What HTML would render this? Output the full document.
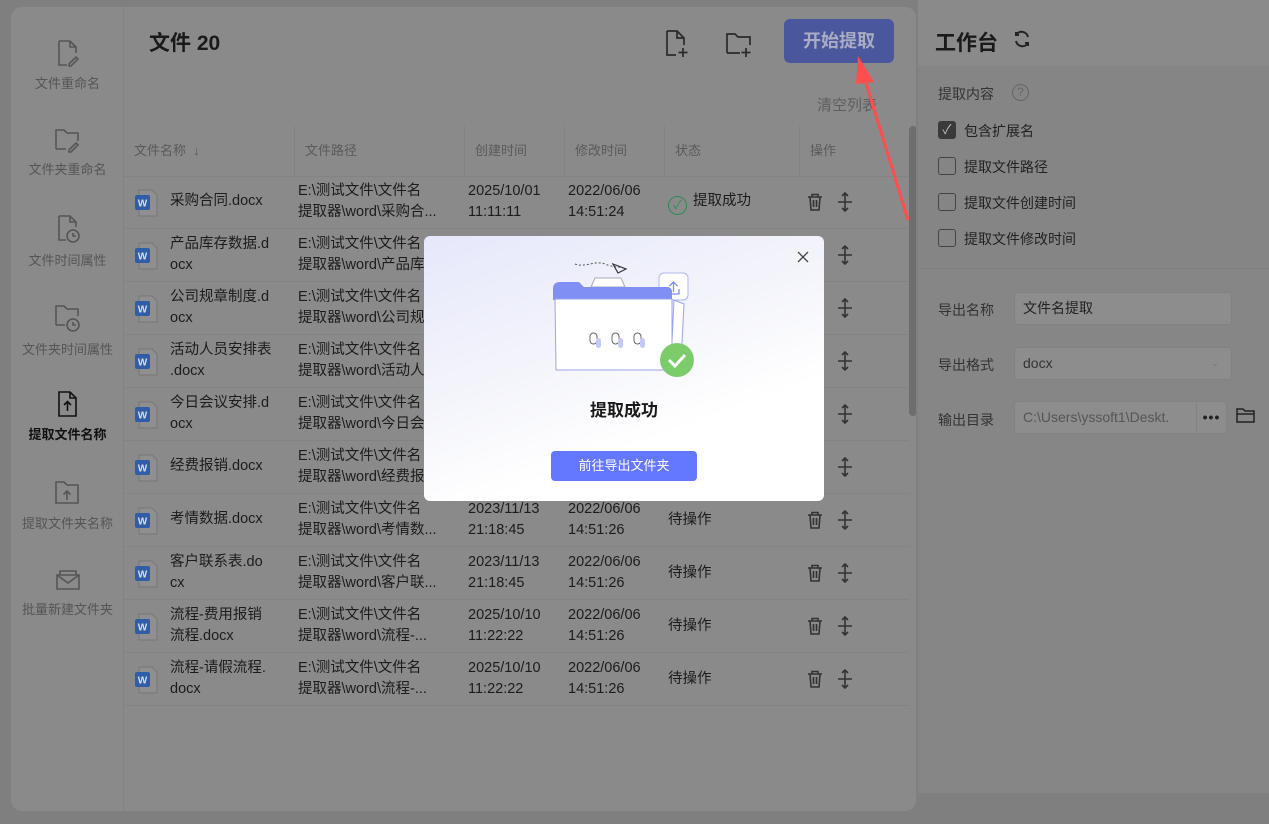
<!DOCTYPE html>
<html><head><meta charset="utf-8"><style>
*{box-sizing:border-box;margin:0;padding:0}
body{width:1269px;height:824px;background:#7f7f7f;font-family:"Liberation Sans","Noto Sans CJK SC",sans-serif;position:relative;overflow:hidden;color:#1c1c1c}
.card{position:absolute;left:10px;top:6px;width:907px;height:806px;background:#8a8a8a;border-radius:12px;border:1px solid #808080;overflow:hidden}
.side{position:absolute;left:0;top:0;width:113px;height:100%;border-right:1px solid #828282}
.si{position:absolute;left:0;width:113px;text-align:center;font-size:13px;color:#555}
.si svg{display:block;margin:0 auto 6px}
.si.act{color:#111;font-weight:bold}
.abs{position:absolute}
.th{position:absolute;top:119px;height:50px;line-height:50px;font-size:13px;color:#5a5a5a;padding-left:10px;border-left:1px solid #828282}
.row{position:absolute;left:113px;width:785px;height:53px;border-bottom:1px solid #838383;font-size:14.5px}
.row div{position:absolute;line-height:21px}
.w{position:absolute;left:10px;top:13px;width:24px;height:28px}
.rp{position:absolute;left:918px;top:0;width:351px;height:793px;background:#8a8a8a}
.cb{position:absolute;left:938px;width:18px;height:18px;border:1px solid #444;border-radius:3px}
.lbl{position:absolute;font-size:14px;color:#222}
.inp{position:absolute;left:1014px;width:218px;height:33px;border:1px solid #828282;border-radius:4px;background:#8d8d8d;font-size:14px;line-height:31px;padding-left:8px}
</style></head><body>
<div class="card">
 <div class="side">
  <div class="si" style="top:32px"><svg width="26" height="28" viewBox="0 0 26 28" fill="none" stroke="#555" stroke-width="1.6"><path d="M4 2h11l6 6v6M4 2v24h8M15 2v6h6"/><path d="M14 25l7-7 2 2-7 7h-2z"/></svg>文件重命名</div>
  <div class="si" style="top:120px"><svg width="28" height="26" viewBox="0 0 28 26" fill="none" stroke="#555" stroke-width="1.6"><path d="M2 22V3h8l3 3h11v8M2 22h10"/><path d="M15 23l7-7 2 2-7 7h-2z"/></svg>文件夹重命名</div>
  <div class="si" style="top:207px"><svg width="26" height="30" viewBox="0 0 26 30" fill="none" stroke="#555" stroke-width="1.6"><path d="M4 2h11l6 6v5M4 2v24h7M15 2v6h6"/><circle cx="18" cy="22" r="6"/><path d="M18 19v3h3"/></svg>文件时间属性</div>
  <div class="si" style="top:296px"><svg width="28" height="30" viewBox="0 0 28 30" fill="none" stroke="#555" stroke-width="1.6"><path d="M2 22V3h8l3 3h11v7M2 22h9"/><circle cx="19" cy="22" r="6"/><path d="M19 19v3h3"/></svg>文件夹时间属性</div>
  <div class="si act" style="top:383px"><svg width="26" height="28" viewBox="0 0 26 28" fill="none" stroke="#111" stroke-width="1.6"><path d="M4 2h11l6 6v18H4zM15 2v6h6"/><path d="M12.5 21v-9M9 15l3.5-3.5L16 15"/></svg>提取文件名称</div>
  <div class="si" style="top:472px"><svg width="28" height="28" viewBox="0 0 28 28" fill="none" stroke="#555" stroke-width="1.6"><path d="M2 24V3h8l3 3h11v18z"/><path d="M13 21v-9M9.5 15.5L13 12l3.5 3.5"/></svg>提取文件夹名称</div>
  <div class="si" style="top:560px"><svg width="28" height="26" viewBox="0 0 28 26" fill="none" stroke="#555" stroke-width="1.6"><path d="M3 22V8h22v14z"/><path d="M3 8l11 8 11-8M6 8V4h16v4"/></svg>批量新建文件夹</div>
 </div>
 <div class="abs" style="left:138px;top:20px;font-size:21px;font-weight:bold;color:#1a1a1a">文件 20</div>
 <svg class="abs" style="left:653px;top:22px" width="26" height="30" viewBox="0 0 26 30" fill="none" stroke="#2a2a2a" stroke-width="1.7"><path d="M3 2h10l7 7v7M3 2v24h9M13 2v7h7M19 19v9M14.5 23.5h9"/></svg>
 <svg class="abs" style="left:714px;top:24px" width="30" height="28" viewBox="0 0 30 28" fill="none" stroke="#2a2a2a" stroke-width="1.7"><path d="M2 22V3h8l3 3h12v8M2 22h13M21 17v9M16.5 21.5h9"/></svg>
 <div class="abs" style="left:773px;top:12px;width:110px;height:44px;background:#4b579c;border-radius:6px;color:#a9acc4;font-size:18px;font-weight:bold;text-align:center;line-height:44px">开始提取</div>
 <div class="abs" style="left:806px;top:87px;font-size:15px;color:#5e5e5e">清空列表</div>
 <div class="th" style="left:113px;width:170px;border-left:none">文件名称 &nbsp;↓</div>
 <div class="th" style="left:283px;width:170px">文件路径</div>
 <div class="th" style="left:453px;width:100px">创建时间</div>
 <div class="th" style="left:553px;width:100px">修改时间</div>
 <div class="th" style="left:653px;width:135px">状态</div>
 <div class="th" style="left:788px;width:110px">操作</div>
 <div class="abs" style="left:113px;top:169px;width:785px;height:1px;background:#838383"></div>
 <div class="abs" style="left:898px;top:119px;width:8px;height:290px;background:#6e6e6e;border-radius:4px"></div>
 <div id="rows"></div>
</div>
<div class="rp">
 <div class="abs" style="left:17px;top:27px;font-size:21px;font-weight:bold;color:#1a1a1a">工作台</div>
 <svg class="abs" style="left:95px;top:30px" width="18" height="18" viewBox="0 0 18 18" fill="none" stroke="#222" stroke-width="2"><path d="M15 7A6.5 6.5 0 0 0 3 5M3 11a6.5 6.5 0 0 0 12 2"/><path d="M3 2v3h3M15 16v-3h-3"/></svg>
 <div class="abs" style="left:0;top:66px;width:351px;height:203px;background:#858585;border-bottom:1px solid #808080"></div>
 <div class="abs" style="left:0;top:269px;width:351px;height:524px;background:#868686"></div>
</div>
<div class="lbl" style="left:938px;top:84px;color:#333">提取内容</div>
<div class="abs" style="left:1012px;top:84px;width:17px;height:17px;border:1.5px solid #666;border-radius:50%;font-size:12px;color:#666;text-align:center;line-height:14px">?</div>
<div class="cb" style="top:121px;background:#3a3a3a;border-color:#3a3a3a;color:#bbb;font-size:13px;text-align:center;line-height:16px">✓</div><div class="lbl" style="left:964px;top:121px">包含扩展名</div>
<div class="cb" style="top:157px"></div><div class="lbl" style="left:964px;top:157px">提取文件路径</div>
<div class="cb" style="top:193px"></div><div class="lbl" style="left:964px;top:193px">提取文件创建时间</div>
<div class="cb" style="top:229px"></div><div class="lbl" style="left:964px;top:229px">提取文件修改时间</div>
<div class="lbl" style="left:938px;top:300px;color:#333">导出名称</div><div class="inp" style="top:292px;color:#222">文件名提取</div>
<div class="lbl" style="left:938px;top:355px;color:#333">导出格式</div><div class="inp" style="top:347px;color:#333">docx<span style="position:absolute;right:12px;color:#777;font-size:10px">⌄</span></div>
<div class="lbl" style="left:938px;top:410px;color:#333">输出目录</div><div class="inp" style="top:401px;width:213px;color:#555;overflow:hidden;white-space:nowrap">C:\Users\yssoft1\Deskt.<span style="position:absolute;right:0;top:0;width:30px;height:31px;border-left:1px solid #828282;background:#8d8d8d;text-align:center;color:#222;font-weight:bold;letter-spacing:1px">•••</span></div>
<svg class="abs" style="left:1236px;top:407px" width="20" height="18" viewBox="0 0 20 18" fill="none" stroke="#222" stroke-width="1.5"><path d="M1 15V2h6l2 2h9v11zM1 7h17"/></svg>

<div class="abs" style="left:424px;top:236px;width:400px;height:265px;border-radius:6px;background:linear-gradient(160deg,#e6e8fb 0%,#f3f4fb 40%,#ffffff 70%);">
 <svg class="abs" style="left:372px;top:14px" width="14" height="14" viewBox="0 0 14 14" stroke="#444" stroke-width="1.3"><path d="M2 2l10 10M12 2L2 12"/></svg>
 <svg class="abs" style="left:125px;top:20px" width="150" height="125" viewBox="0 0 150 125" fill="none">
  <path d="M26 8c10 4 20-4 30 0s12 2 18 4" stroke="#555" stroke-width="1" stroke-dasharray="2 2"/>
  <path d="M64 8l13 5-8 4z" stroke="#333" stroke-width="1.2"/>
  <rect x="110" y="17" width="29" height="27" rx="5" fill="#fff" stroke="#b0b6f0"/>
  <path d="M124.5 36v-10M120.5 30l4-4 4 4M119 33v5h11v-5" stroke="#7f8cf0" stroke-width="1.3"/>
  <path d="M125 44l-3 62h10l3-58z" fill="#fff" stroke="#9aa3f2"/>
  <path d="M42 31l4-9h26l4 9z" fill="#fff" stroke="#aab"/>
  <path d="M4 33q0-7 7-7h19l5 5h83q5 0 5 5v8H4z" fill="#7f8ff3"/>
  <path d="M6 43h117v71H7z" fill="#fff" stroke="#9aa3f2"/>
  <g stroke="#666" stroke-width="1" fill="#fff"><rect x="41" y="77" width="7" height="11" rx="3.5"/><rect x="63" y="77" width="7" height="11" rx="3.5"/><rect x="85" y="77" width="7" height="11" rx="3.5"/></g>
  <g fill="#c4c9f7"><rect x="47" y="82" width="5" height="10" rx="2.5"/><rect x="69" y="82" width="5" height="10" rx="2.5"/><rect x="91" y="82" width="5" height="10" rx="2.5"/></g>
  <circle cx="128" cy="104" r="17" fill="#7ccc6c"/>
  <path d="M120 104l6 6 10-11" stroke="#fff" stroke-width="3" fill="none"/>
 </svg>
 <div class="abs" style="left:0;top:160px;width:400px;text-align:center;font-size:17px;font-weight:bold;color:#1a1a1a">提取成功</div>
 <div class="abs" style="left:127px;top:215px;width:146px;height:30px;background:#6477ff;border-radius:4px;color:#fff;font-size:13px;text-align:center;line-height:30px">前往导出文件夹</div>
</div>
<svg class="abs" style="left:840px;top:50px" width="80" height="180" viewBox="0 0 80 180"><path d="M68 170L22 20" stroke="#ff4d4d" stroke-width="3"/><path d="M18 6l16 26-18 2z" fill="#ff4d4d"/></svg>
<script>
var d=[["采购合同.docx","","采购合...","2025/10/01","11:11:11","2022/06/06","14:51:24",1],
["产品库存数据.d","ocx","产品库...","","","","",0],
["公司规章制度.d","ocx","公司规...","","","","",0],
["活动人员安排表",".docx","活动人...","","","","",0],
["今日会议安排.d","ocx","今日会...","","","","",0],
["经费报销.docx","","经费报...","","","","",0],
["考情数据.docx","","考情数...","2023/11/13","21:18:45","2022/06/06","14:51:26",2],
["客户联系表.do","cx","客户联...","2023/11/13","21:18:45","2022/06/06","14:51:26",2],
["流程-费用报销","流程.docx","流程-...","2025/10/10","11:22:22","2022/06/06","14:51:26",2],
["流程-请假流程.","docx","流程-...","2025/10/10","11:22:22","2022/06/06","14:51:26",2]];
var h="";d.forEach(function(r,i){var t=169+i*53;
h+='<div class="row" style="top:'+t+'px"><svg class="w" viewBox="0 0 24 28"><path d="M5 1h13l5 5v21H5z" fill="#8f8f8f" stroke="#777"/><rect x="1" y="6" width="15" height="15" rx="2" fill="#2f5da8"/><text x="8.5" y="17.5" font-size="10" font-weight="bold" fill="#ddd" text-anchor="middle" font-family="Liberation Sans">W</text></svg>';
var nm=r[1]?r[0]+'<br>'+r[1]:r[0];
h+='<div style="left:46px;top:'+(r[1]?5:15)+'px">'+nm+'</div>';
h+='<div style="left:174px;top:5px">E:\\测试文件\\文件名<br>提取器\\word\\'+r[2]+'</div>';
if(r[3])h+='<div style="left:344px;top:5px">'+r[3]+'<br>'+r[4]+'</div><div style="left:444px;top:5px">'+r[5]+'<br>'+r[6]+'</div>';
if(r[7]==1)h+='<div style="left:544px;top:15px"><span style="display:inline-block;width:19px;height:19px;border:1.5px solid #2e8a55;border-radius:50%;color:#2e8a55;font-size:12px;text-align:center;line-height:16px;vertical-align:-4px;margin-right:6px">✓</span>提取成功</div>';
if(r[7]==2)h+='<div style="left:544px;top:16px">待操作</div>';
h+='<svg style="position:absolute;left:683px;top:17px" width="16" height="18" viewBox="0 0 16 18" fill="none" stroke="#333" stroke-width="1.6"><path d="M1 4h14M5 4V1.5h6V4M3 4l1 13h8l1-13M6.5 7v7M9.5 7v7"/></svg><svg style="position:absolute;left:713px;top:16px" width="16" height="20" viewBox="0 0 16 20" fill="none" stroke="#333" stroke-width="1.6"><path d="M8 1v18M1 10h14M5 4l3-3 3 3M5 16l3 3 3-3"/></svg></div>';});
document.getElementById("rows").innerHTML=h;
</script>
</body></html>
